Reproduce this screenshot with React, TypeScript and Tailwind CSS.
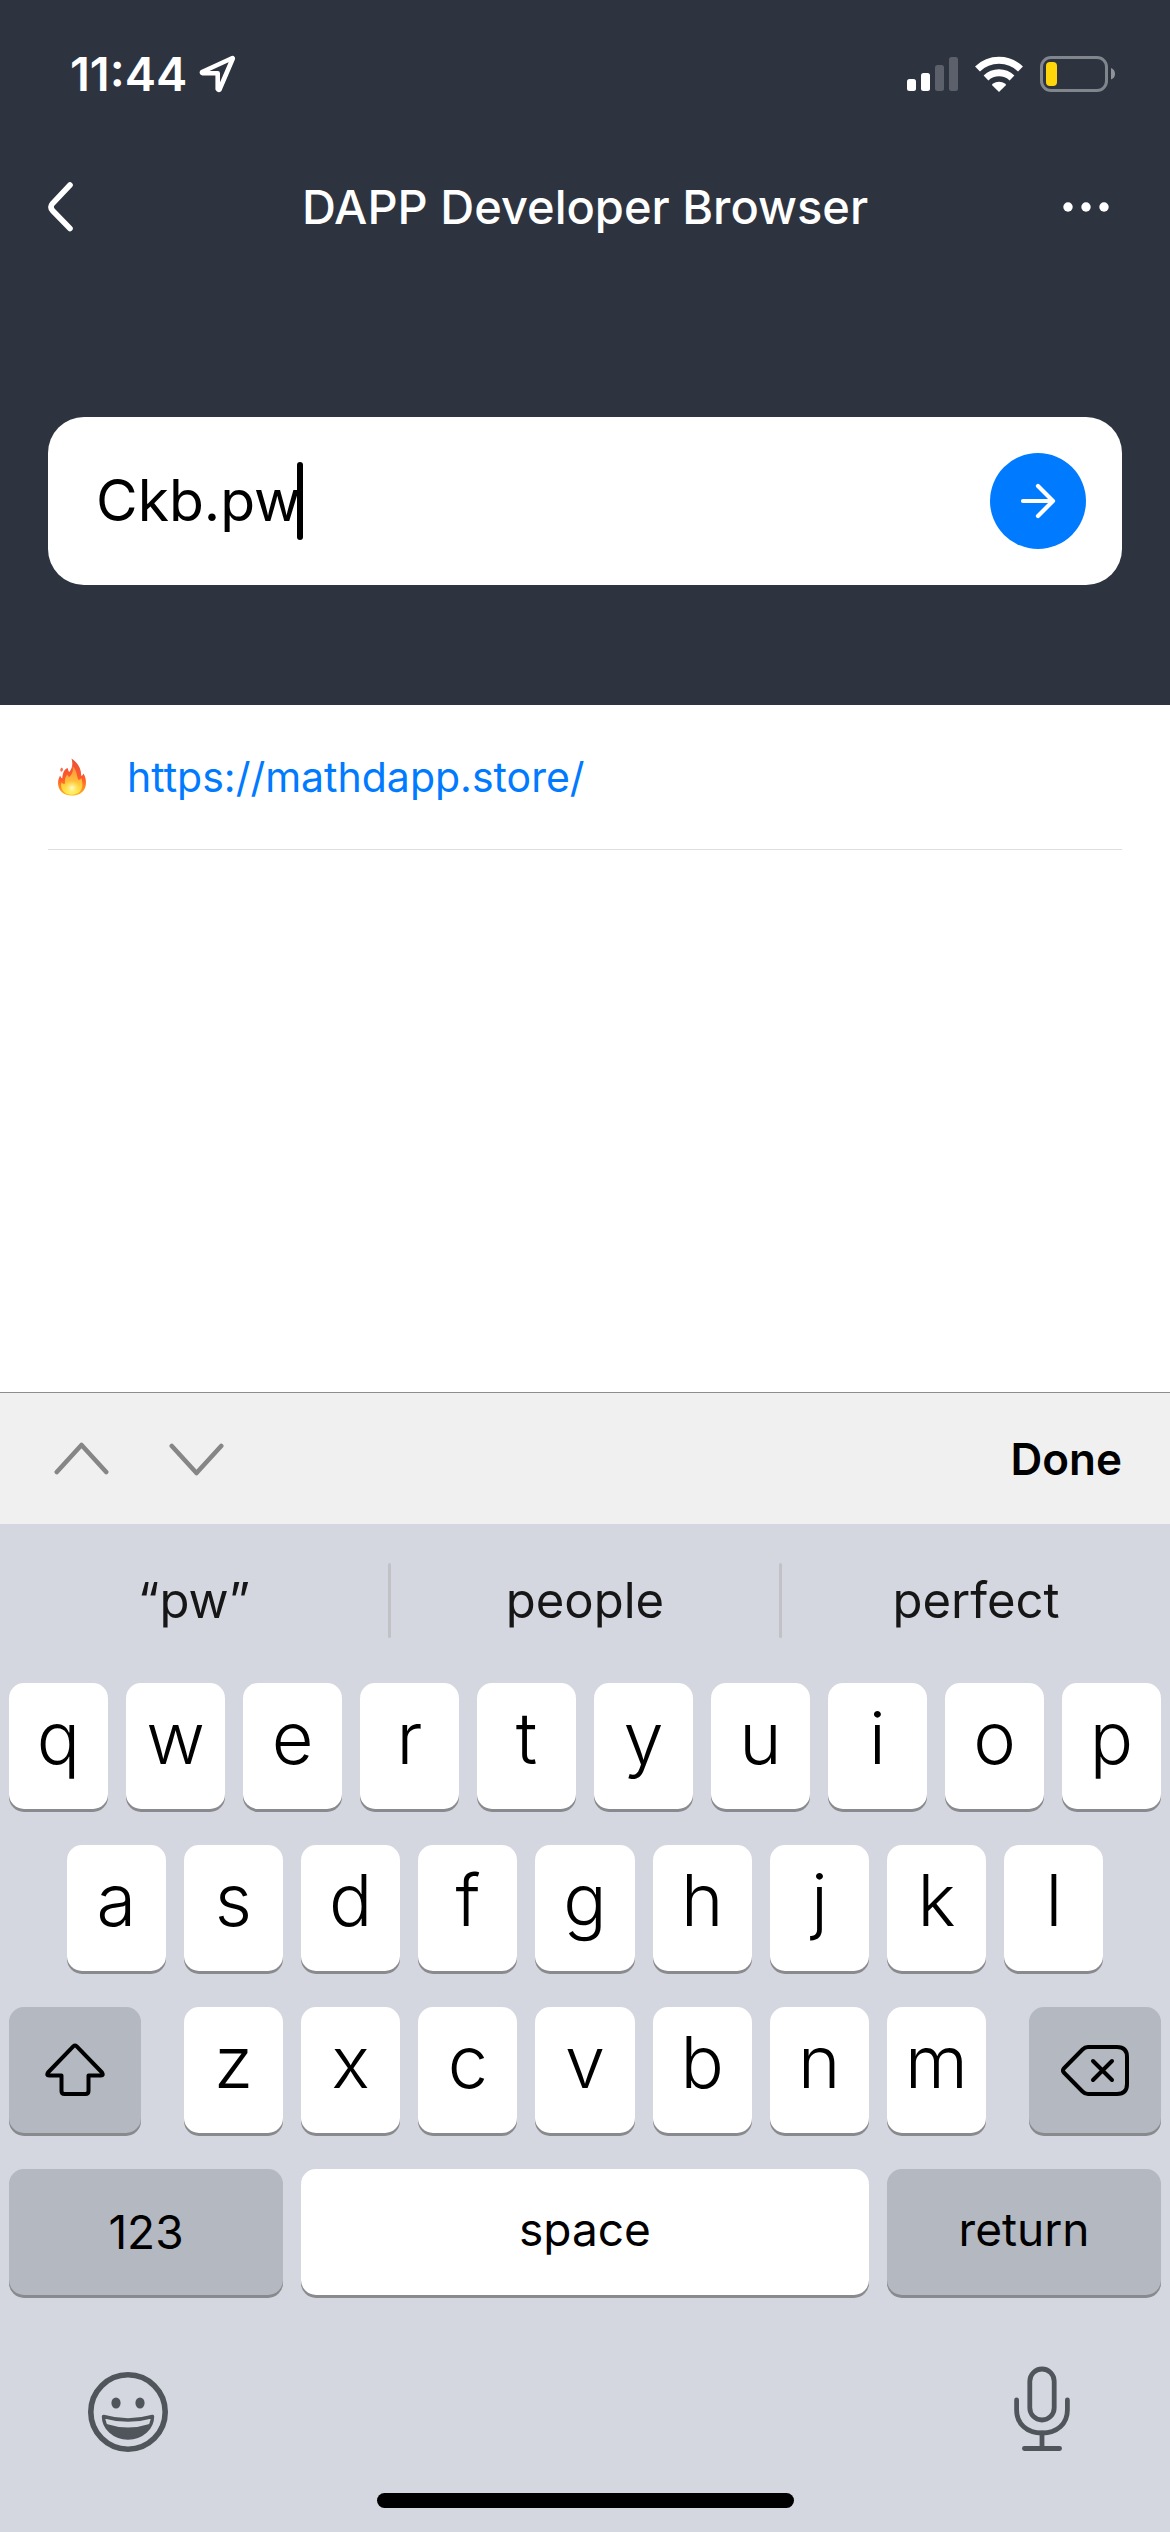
import React from 'react';

const TOP_ROW = ['q', 'w', 'e', 'r', 't', 'y', 'u', 'i', 'o', 'p'];
const HOME_ROW = ['a', 's', 'd', 'f', 'g', 'h', 'j', 'k', 'l'];
const BOTTOM_ROW = ['z', 'x', 'c', 'v', 'b', 'n', 'm'];
const SUGGESTIONS = ['“pw”', 'people', 'perfect'];

const StatusBar: React.FC = () => (
  <div className="flex h-[148px] items-center justify-between pr-[54px] pl-[70px]">
    <div className="flex items-center gap-3">
      <span className="text-[47px] leading-[56px] font-semibold">11:44</span>
      <svg width="37" height="38" viewBox="0 0 37 38" fill="none" stroke="currentColor" strokeWidth="4.6" strokeLinejoin="round">
        <path d="M33.5 3 L3 17 Q2.5 18 4 18.3 L18.7 18.3 L18.7 34 Q19.5 35.5 20.5 34.5 L33.8 3.5 Z" />
      </svg>
    </div>
    <div className="flex items-center gap-[17px]">
      <svg width="51" height="36" viewBox="0 0 51 36" fill="currentColor">
        <rect x="0" y="23" width="9" height="12" rx="2.5" />
        <rect x="14" y="17" width="9" height="18" rx="2.5" />
        <rect x="28" y="9" width="9" height="26" rx="2.5" opacity="0.22" />
        <rect x="42" y="1" width="9" height="34" rx="2.5" opacity="0.22" />
      </svg>
      <svg width="48" height="36" viewBox="0 0 48 36" fill="none" stroke="currentColor">
        <path d="M2.5 13 A31 31 0 0 1 45.5 13" strokeWidth="7" />
        <path d="M11 22 A19 19 0 0 1 37 22" strokeWidth="7" />
        <path d="M24 36 L17.4 29.5 Q16.6 28.5 17.6 27.8 Q24 23.6 30.4 27.8 Q31.4 28.5 30.6 29.5 Z" fill="currentColor" stroke="none" />
      </svg>
      <svg width="76" height="36" viewBox="0 0 76 36" fill="none">
        <rect x="1.5" y="1.5" width="65" height="33" rx="9.5" stroke="#81868c" strokeWidth="3" />
        <rect x="6" y="6" width="11" height="24" rx="4" fill="#ffd60a" />
        <path d="M71 12 Q75 13.5 75 18 Q75 22 71 23.5 Z" fill="#909499" />
      </svg>
    </div>
  </div>
);

const NavBar: React.FC = () => (
  <div className="flex h-[118px] items-center justify-between px-12">
    <button type="button" aria-label="Back" className="flex w-24 justify-start">
      <svg width="26" height="50" viewBox="0 0 26 50" fill="none" stroke="currentColor" strokeWidth="5.6" strokeLinecap="round">
        <path d="M22 3 L4.5 21.5 Q1.5 25 4.5 28.5 L22 46.5" />
      </svg>
    </button>
    <h1 className="text-[47px] leading-[56px] font-medium">DAPP Developer Browser</h1>
    <button type="button" aria-label="More" className="flex w-24 justify-end pr-3">
      <svg width="48" height="10" viewBox="0 0 48 10" fill="currentColor">
        <circle cx="6" cy="5" r="4.7" />
        <circle cx="24" cy="5" r="4.7" />
        <circle cx="42" cy="5" r="4.7" />
      </svg>
    </button>
  </div>
);

const AddressField: React.FC = () => (
  <form className="mx-12 mt-[151px] flex h-[168px] items-center rounded-[36px] bg-white pr-9 pl-12" onSubmit={(e) => e.preventDefault()}>
    <label className="flex flex-1 cursor-text items-center">
      <input
        type="text"
        aria-label="DApp address"
        defaultValue="Ckb.pw"
        className="field-sizing-content text-[57px] leading-[78px] text-black caret-transparent outline-none"
      />
      <span className="-ml-1 h-[78px] w-[6px] rounded-full bg-black" />
    </label>
    <button type="submit" aria-label="Go" className="flex size-24 items-center justify-center rounded-full bg-[#007aff] text-white">
      <svg width="36" height="36" viewBox="0 0 36 36" fill="none" stroke="currentColor" strokeWidth="4.2" strokeLinecap="round" strokeLinejoin="round">
        <path d="M3 18 H33 M18 3 L33 18 L18 33" />
      </svg>
    </button>
  </form>
);

const Flame: React.FC = () => (
  <svg width="30" height="38" viewBox="0 0 30 38">
    <defs>
      <linearGradient id="flameOuter" x1="0" y1="0" x2="0" y2="1">
        <stop offset="0%" stopColor="#e8503a" />
        <stop offset="55%" stopColor="#ff5a2a" />
        <stop offset="100%" stopColor="#ffb320" />
      </linearGradient>
      <linearGradient id="flameInner" x1="0" y1="0" x2="0" y2="1">
        <stop offset="0%" stopColor="#ff8a3c" />
        <stop offset="55%" stopColor="#ffc03a" />
        <stop offset="100%" stopColor="#fff04a" />
      </linearGradient>
      <radialGradient id="flameCore">
        <stop offset="0%" stopColor="#fffbd0" />
        <stop offset="100%" stopColor="#ffee55" stopOpacity="0" />
      </radialGradient>
    </defs>
    <path d="M14.5 0.5 C20 4 24.5 10 24.2 18 C25.5 17.5 26 16.5 26.6 15.5 C29 20 29.8 25 28 30 C26 35 21 37.5 15 37.5 C7.5 37.5 2 33.5 1.2 27 C0.6 22.5 2 20.5 3 17.5 C3.8 19 4.3 20 5.3 20.5 C5.5 15 7.5 11 10.6 10 C11.2 12 11.5 13.5 12.3 14 C15.5 10 16 5 14.5 0.5 Z" fill="url(#flameOuter)" />
    <path d="M15.5 8 C20.5 13 19.5 18.5 21.5 22 C23.5 21.5 23.5 21 24.3 20 C26 25 26 30 23 33.5 C19 37.6 11 37.6 7 34 C4 31 3.5 27.5 4.5 24.5 C6 26 6.8 26.2 8 25.5 C7.5 21 8.5 18.5 10.5 16.5 C11 18.5 11.8 19 12.8 18.5 C15.5 16 16.5 12 15.5 8 Z" fill="url(#flameInner)" />
    <ellipse cx="15" cy="30" rx="8" ry="8" fill="url(#flameCore)" />
    <path d="M4.8 9.5 C6.5 10.5 6.3 12.5 4.6 13.8 C2.6 13 3 10.5 4.8 9.5 Z" fill="#ff6a4a" />
  </svg>
);

const Key: React.FC<{ label: string }> = ({ label }) => (
  <button
    type="button"
    className="flex h-[126px] min-w-0 flex-1 items-center justify-center rounded-[15px] bg-white pb-4 text-[72px] leading-[80px] font-[350] shadow-[0_3px_0_#898a8d]"
  >
    {label}
  </button>
);

const Keyboard: React.FC = () => (
  <section aria-label="Keyboard" className="bg-[#d4d7df] text-black">
    <div className="flex h-[153px] items-center">
      {SUGGESTIONS.map((word, i) => (
        <React.Fragment key={word}>
          {i > 0 && <span className="h-[75px] w-[3px] rounded-full bg-[#c1c2c6]" />}
          <button type="button" className="flex-1 text-[49px] leading-[60px] text-[#161616]">
            {word}
          </button>
        </React.Fragment>
      ))}
    </div>

    <div className="flex flex-col gap-9 px-[9px] pt-[6px]">
      <div className="flex gap-[18px]">
        {TOP_ROW.map((k) => <Key key={k} label={k} />)}
      </div>
      <div className="flex gap-[18px] px-[5%]">
        {HOME_ROW.map((k) => <Key key={k} label={k} />)}
      </div>
      <div className="flex gap-[43px]">
        <button type="button" aria-label="Shift" className="flex h-[126px] w-[132px] items-center justify-center rounded-[15px] bg-[#b3b8c1] shadow-[0_3px_0_#898a8d]">
          <svg width="60" height="54" viewBox="0 0 60 54" fill="none" stroke="currentColor" strokeWidth="4" strokeLinejoin="round">
            <path d="M28.5 3.2 Q30 1.8 31.5 3.2 L57 29.5 Q58.8 32.5 56 32.5 H43.5 V48 Q43.5 51 40.5 51 H19.5 Q16.5 51 16.5 48 V32.5 H4 Q1.2 32.5 3 29.5 Z" />
          </svg>
        </button>
        <div className="flex flex-1 gap-[18px]">
          {BOTTOM_ROW.map((k) => <Key key={k} label={k} />)}
        </div>
        <button type="button" aria-label="Delete" className="flex h-[126px] w-[132px] items-center justify-center rounded-[15px] bg-[#b3b8c1] shadow-[0_3px_0_#898a8d]">
          <svg width="68" height="51" viewBox="0 0 68 51" fill="none" stroke="currentColor" strokeWidth="4" strokeLinecap="round" strokeLinejoin="round">
            <path d="M27 2 H56 Q66 2 66 12 V39 Q66 49 56 49 H27 Q24 49 21.5 46.5 L2.8 27.5 Q1.2 25.5 2.8 23.5 L21.5 4.5 Q24 2 27 2 Z" />
            <path d="M32 16 L51 35 M51 16 L32 35" />
          </svg>
        </button>
      </div>
      <div className="flex gap-[18px] text-[46px] leading-[56px]">
        <button type="button" className="h-[126px] flex-[274] basis-0 rounded-[15px] bg-[#b3b8c1] shadow-[0_3px_0_#898a8d]">123</button>
        <button type="button" className="h-[126px] flex-[568] basis-0 rounded-[15px] bg-white pb-1.5 shadow-[0_3px_0_#898a8d]">space</button>
        <button type="button" className="h-[126px] flex-[274] basis-0 rounded-[15px] bg-[#b3b8c1] pb-1.5 shadow-[0_3px_0_#898a8d]">return</button>
      </div>
    </div>

    <div className="mt-[71px] flex items-center justify-between px-[88px] text-[#50555c]">
      <button type="button" aria-label="Emoji">
        <svg width="80" height="86" viewBox="0 0 80 86" fill="none" stroke="currentColor">
          <circle cx="40" cy="46" r="37.2" strokeWidth="5.6" />
          <ellipse cx="28" cy="37" rx="4.6" ry="5.6" fill="currentColor" stroke="none" />
          <ellipse cx="52" cy="37" rx="4.6" ry="5.6" fill="currentColor" stroke="none" />
          <path d="M15.5 50.5 Q40 57.5 64.5 50.5 C64.5 62 54 72 40 72 C26 72 15.5 62 15.5 50.5 Z" strokeWidth="3.4" strokeLinejoin="round" />
          <path d="M18.5 58 Q40 65 61.5 58 C58 67 50 72 40 72 C30 72 22 67 18.5 58 Z" fill="currentColor" stroke="none" />
        </svg>
      </button>
      <button type="button" aria-label="Dictate">
        <svg width="80" height="86" viewBox="0 0 80 86" fill="none" stroke="currentColor" strokeWidth="4.8" strokeLinecap="round">
          <rect x="27.8" y="3" width="24.4" height="51" rx="12.2" />
          <path d="M14.6 34 V44 C14.6 58 25 67 40 67 C55 67 65.4 58 65.4 44 V34" />
          <path d="M40 67 V82 M22.4 82.5 H57.6" />
        </svg>
      </button>
    </div>

    <div className="mt-[41px] flex justify-center pb-6">
      <span className="h-[15px] w-[417px] rounded-full bg-black" />
    </div>
  </section>
);

export default function App() {
  return (
    <div className="flex min-h-screen flex-col bg-white font-['Inter','Liberation_Sans',sans-serif]">
      <header className="bg-[#2d3440] pb-[120px] text-white">
        <StatusBar />
        <NavBar />
        <AddressField />
      </header>

      <main className="flex-1 px-12">
        <div className="flex h-[145px] items-center gap-10 border-b border-[#dcdee0] pl-[9px]">
          <Flame />
          <a href="https://mathdapp.store/" className="text-[41px] leading-[54px] text-[#007aff]">
            https://mathdapp.store/
          </a>
        </div>
      </main>

      <div className="flex h-[132px] items-center justify-between border-t border-[#8e8e90] bg-[#f0f0f0] px-12">
        <div className="flex gap-[60px] pl-[6px] text-[#868686]">
          <button type="button" aria-label="Previous field">
            <svg width="55" height="34" viewBox="0 0 55 34" fill="none" stroke="currentColor" strokeWidth="4.6" strokeLinecap="round" strokeLinejoin="round">
              <path d="M2.8 30 L27.5 3 L52.2 30" />
            </svg>
          </button>
          <button type="button" aria-label="Next field">
            <svg width="55" height="34" viewBox="0 0 55 34" fill="none" stroke="currentColor" strokeWidth="4.6" strokeLinecap="round" strokeLinejoin="round">
              <path d="M2.8 4 L27.5 31 L52.2 4" />
            </svg>
          </button>
        </div>
        <button type="button" className="text-[44px] leading-[56px] font-semibold text-black">Done</button>
      </div>

      <Keyboard />
    </div>
  );
}
